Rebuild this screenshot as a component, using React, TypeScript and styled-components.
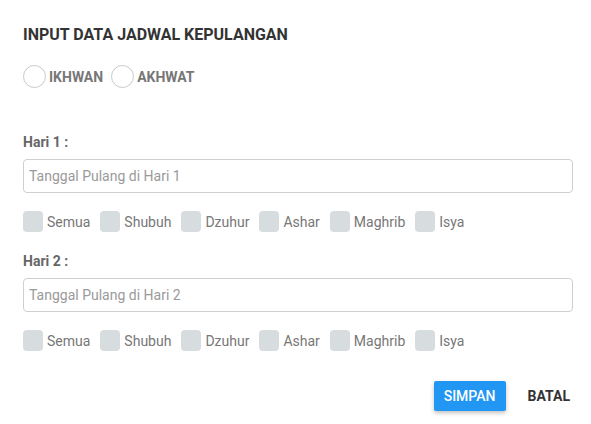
import React, { useState } from 'react'
import styled, { createGlobalStyle } from 'styled-components'

const GlobalStyle = createGlobalStyle`
  body {
    margin: 0;
    background: #ffffff;
    font-family: Roboto, 'Liberation Sans', sans-serif;
  }
`

const Dialog = styled.div`
  width: 591px;
  height: 424px;
  box-sizing: border-box;
  padding: 25px 18px 0 23px;
  display: flex;
  flex-direction: column;
  background: #fff;
`

const Title = styled.h2`
  margin: 0;
  font-size: 16px;
  line-height: 19px;
  font-weight: 700;
  color: #333;
`

const RadioRow = styled.div`
  display: flex;
  align-items: center;
  gap: 8px;
  margin-top: 21px;
`

const RadioLabel = styled.label`
  display: flex;
  align-items: center;
  gap: 3px;
  font-size: 14px;
  font-weight: 700;
  color: #777;
  cursor: pointer;
`

const RadioCircle = styled.span<{ $checked: boolean }>`
  width: 21px;
  height: 21px;
  border-radius: 50%;
  border: 1px solid #c9c9c9;
  background: ${p => (p.$checked ? '#2196f3' : '#fff')};
`

const DaySection = styled.div<{ $first?: boolean }>`
  margin-top: ${p => (p.$first ? '46px' : '21px')};
  display: flex;
  flex-direction: column;
`

const DayLabel = styled.div`
  font-size: 14px;
  font-weight: 700;
  line-height: 16px;
  color: #666;
`

const DateInput = styled.input`
  margin-top: 9px;
  height: 34px;
  box-sizing: border-box;
  width: 100%;
  padding: 0 5px;
  border: 1px solid #cfcfcf;
  border-radius: 4px;
  font-family: inherit;
  font-size: 14px;
  color: #333;

  &::placeholder {
    color: #9a9a9a;
  }

  &:focus {
    outline: none;
    border-color: #2196f3;
  }
`

const CheckRow = styled.div`
  display: flex;
  align-items: center;
  gap: 10px;
  margin-top: 18px;
`

const CheckLabel = styled.label`
  display: flex;
  align-items: center;
  gap: 4px;
  font-size: 14px;
  color: #777;
  cursor: pointer;
`

const CheckBox = styled.span<{ $checked: boolean }>`
  width: 20px;
  height: 21px;
  border-radius: 4px;
  background: ${p => (p.$checked ? '#2196f3' : '#d7dcdf')};
`

const Actions = styled.div`
  display: flex;
  justify-content: flex-end;
  align-items: center;
  gap: 14px;
  margin-top: 30px;
`

const Button = styled.button<{ $variant?: 'primary' }>`
  height: 30px;
  padding: 0 8px;
  border: none;
  border-radius: 2px;
  font-family: inherit;
  font-size: 14px;
  font-weight: 500;
  cursor: pointer;

  ${p => p.$variant === 'primary' ? `
    width: 72px;
    background: #2196f3;
    color: #fff;
    box-shadow: 0 2px 4px rgba(0, 0, 0, 0.25);
  ` : `
    background: transparent;
    color: #333;
    font-weight: 700;
    padding: 0 3px 0 8px;
  `}
`

const prayers = ['Semua', 'Shubuh', 'Dzuhur', 'Ashar', 'Maghrib', 'Isya']

const DayBlock: React.FC<{ day: number; first?: boolean }> = ({ day, first }) => {
  const [checked, setChecked] = useState<string[]>([])

  const toggle = (name: string) => {
    setChecked(prev =>
      prev.includes(name) ? prev.filter(n => n !== name) : [...prev, name]
    )
  }

  return (
    <>
      <DaySection $first={first}>
        <DayLabel>Hari {day} :</DayLabel>
        <DateInput type="text" placeholder={`Tanggal Pulang di Hari ${day}`} />
      </DaySection>
      <CheckRow>
        {prayers.map(p => (
          <CheckLabel key={p} onClick={() => toggle(p)}>
            <CheckBox $checked={checked.includes(p)} />
            {p}
          </CheckLabel>
        ))}
      </CheckRow>
    </>
  )
}

export default function App() {
  const [gender, setGender] = useState('')

  return (
    <>
      <GlobalStyle />
      <Dialog>
        <Title>INPUT DATA JADWAL KEPULANGAN</Title>
        <RadioRow>
          {['IKHWAN', 'AKHWAT'].map(g => (
            <RadioLabel key={g} onClick={() => setGender(g)}>
              <RadioCircle $checked={gender === g} />
              {g}
            </RadioLabel>
          ))}
        </RadioRow>

        <DayBlock day={1} first />
        <DayBlock day={2} />

        <Actions>
          <Button $variant="primary">SIMPAN</Button>
          <Button>BATAL</Button>
        </Actions>
      </Dialog>
    </>
  )
}
